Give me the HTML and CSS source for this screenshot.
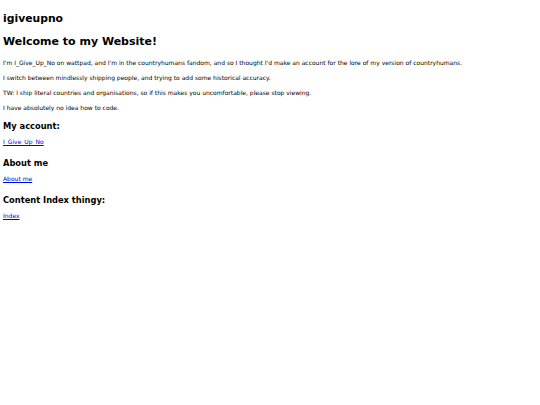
FILE: index.html
```html
<!DOCTYPE html>
<html>
<head>
<meta charset="utf-8">
<link rel="stylesheet" href="styles.css">
</head>
<body>
<div class="site-title">igiveupno</div>
<h1>Welcome to my Website!</h1>
<p>I'm I_Give_Up_No on wattpad, and I'm in the countryhumans fandom, and so I thought I'd make an account for the lore of my version of countryhumans.</p>
<p>I switch between mindlessly shipping people, and trying to add some historical accuracy.</p>
<p>TW: I ship literal countries and organisations, so if this makes you uncomfortable, please stop viewing.</p>
<p>I have absolutely no idea how to code.</p>
<h2>My account:</h2>
<p class="link"><a href="#">I_Give_Up_No</a></p>
<h2>About me</h2>
<p class="link"><a href="#">About me</a></p>
<h2>Content Index thingy:</h2>
<p class="link"><a href="#">Index</a></p>
</body>
</html>
```
FILE: styles.css
```css
body {
  margin: 0;
  padding: 0 3px;
  font-family: "DejaVu Sans", Verdana, sans-serif;
  color: #000;
  background: #fff;
}
.site-title {
  font-size: 10.8px;
  font-weight: bold;
  line-height: 13px;
  margin: 11.5px 0 10.9px;
}
h1 {
  font-size: 11px;
  line-height: 13px;
  margin: 0 0 11px;
}
p {
  font-size: 6px;
  line-height: 8px;
  margin: 0 0 7px;
}
p.link {
  margin-bottom: 11.7px;
}
h2 {
  font-size: 8.3px;
  line-height: 10px;
  margin: 8.2px 0 7.5px;
}
a {
  color: #0000ee;
}
```
